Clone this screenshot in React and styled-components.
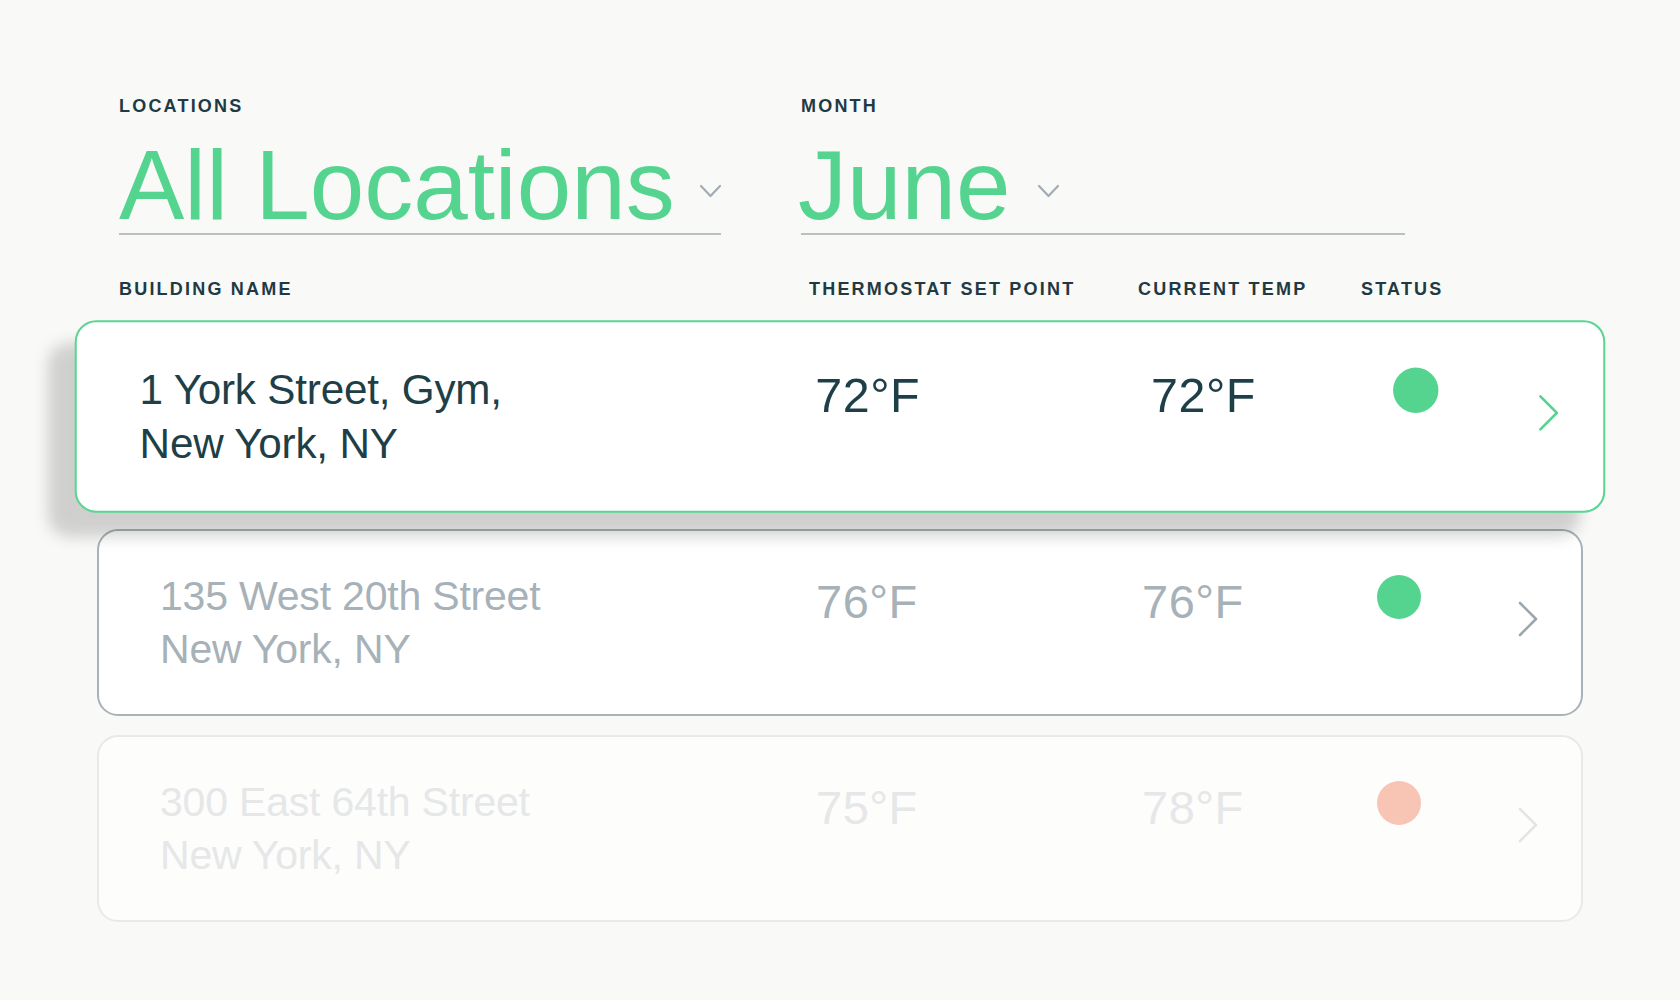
import React from "react";
import styled, { createGlobalStyle } from "styled-components";

const GlobalStyle = createGlobalStyle`
  html, body {
    margin: 0;
    padding: 0;
    background: #f9f9f7;
  }
  body {
    font-family: "Liberation Sans", Arial, sans-serif;
  }
`;

const rows = [
  { name: ["1 York Street, Gym,", "New York, NY"], set: "72°F", current: "72°F", ok: true, tone: "active" },
  { name: ["135 West 20th Street", "New York, NY"], set: "76°F", current: "76°F", ok: true, tone: "muted" },
  { name: ["300 East 64th Street", "New York, NY"], set: "75°F", current: "78°F", ok: false, tone: "faded" },
];

const tones = {
  active: { text: "#1e3f47", border: "#5ad692", chevron: "#55d48f", bg: "#ffffff" },
  muted: { text: "#a7b1b8", border: "#a9b2b9", chevron: "#9ca6ad", bg: "#ffffff" },
  faded: { text: "#e5e7e8", border: "#e8e9e9", chevron: "#e2e4e5", bg: "#fdfdfc" },
};

const Page = styled.div`
  width: 1680px;
  height: 1000px;
  box-sizing: border-box;
  padding: 96px 0 0 97px;
  overflow: hidden;
`;

const Content = styled.div`
  width: 1486px;
  display: flex;
  flex-direction: column;
`;

const Filters = styled.div`
  display: flex;
  gap: 80px;
  padding-left: 22px;
`;

const Filter = styled.div`
  width: ${(p) => p.$w}px;
  display: flex;
  flex-direction: column;
`;

const Label = styled.div`
  font-size: 18px;
  font-weight: 700;
  line-height: 20px;
  letter-spacing: 2.2px;
  color: #1f3a43;
  text-transform: uppercase;
  white-space: nowrap;
`;

const Select = styled.div`
  margin-top: 21px;
  height: 96px;
  display: flex;
  align-items: flex-end;
  border-bottom: 2px solid #b8c0c4;
`;

const SelectValue = styled.span`
  font-size: 98px;
  line-height: 96px;
  color: #55d48f;
  white-space: nowrap;
  margin-left: ${(p) => p.$shift || 0}px;
`;

const Caret = styled.svg`
  width: 23px;
  height: 15px;
  margin-left: ${(p) => p.$gap}px;
  margin-bottom: 34px;
  flex: none;
`;

const HeaderRow = styled.div`
  margin-top: 44px;
  display: grid;
  grid-template-columns: 690px 329px 223px auto;
  padding-left: 22px;
`;

const List = styled.div`
  margin-top: 24px;
  display: flex;
  flex-direction: column;
  gap: 19px;
`;

const Card = styled.div`
  position: relative;
  z-index: ${(p) => (p.$tone === "active" ? 2 : 1)};
  height: 187px;
  box-sizing: border-box;
  border: 2px solid ${(p) => tones[p.$tone].border};
  border-radius: 21px;
  background: ${(p) => tones[p.$tone].bg};
  color: ${(p) => tones[p.$tone].text};
  display: grid;
  grid-template-columns: 656px 326px 235px 1fr auto;
  align-items: center;
  padding: 0 42px 0 61px;
  transform: ${(p) => (p.$tone === "active" ? "scale(1.03)" : "none")};
  box-shadow: ${(p) =>
    p.$tone === "active" ? "-25px 23px 14px rgba(0, 0, 0, 0.17)" : "none"};
`;

const Name = styled.div`
  font-size: 41px;
  line-height: 53px;
  letter-spacing: -0.2px;
  white-space: nowrap;
`;

const Temp = styled.div`
  align-self: start;
  padding-top: 43px;
  font-size: 47px;
  line-height: 56px;
  letter-spacing: 0.5px;
`;

const Dot = styled.div`
  align-self: start;
  margin-top: 44px;
  width: 44px;
  height: 44px;
  border-radius: 50%;
  background: ${(p) => (p.$ok ? "#55d48f" : "#f8c4b3")};
`;

const Chevron = styled.svg`
  justify-self: end;
  width: 22px;
  height: 36px;
  margin-bottom: 8px;
`;

const FilterBar = () => (
  <Filters>
    <Filter $w={602}>
      <Label>Locations</Label>
      <Select>
        <SelectValue>All Locations</SelectValue>
        <Caret $gap={24} viewBox="0 0 23 15">
          <path d="M2 2 L11.5 12 L21 2" fill="none" stroke="#a4abb3" strokeWidth="2.2" strokeLinecap="round" strokeLinejoin="round" />
        </Caret>
      </Select>
    </Filter>
    <Filter $w={604}>
      <Label>Month</Label>
      <Select>
        <SelectValue $shift={-3}>June</SelectValue>
        <Caret $gap={26} viewBox="0 0 23 15">
          <path d="M2 2 L11.5 12 L21 2" fill="none" stroke="#a4abb3" strokeWidth="2.2" strokeLinecap="round" strokeLinejoin="round" />
        </Caret>
      </Select>
    </Filter>
  </Filters>
);

const App = () => {
  return (
    <Page>
      <GlobalStyle />
      <Content>
        <FilterBar />
        <HeaderRow>
          <Label>Building Name</Label>
          <Label>Thermostat Set Point</Label>
          <Label>Current Temp</Label>
          <Label>Status</Label>
        </HeaderRow>
        <List>
          {rows.map((r) => (
            <Card key={r.name[0]} $tone={r.tone}>
              <Name>
                {r.name[0]}
                <br />
                {r.name[1]}
              </Name>
              <Temp>{r.set}</Temp>
              <Temp>{r.current}</Temp>
              <Dot $ok={r.ok} />
              <Chevron viewBox="0 0 22 36">
                <path d="M3 2 L19 18 L3 34" fill="none" stroke={tones[r.tone].chevron} strokeWidth="2.6" strokeLinecap="round" strokeLinejoin="round" />
              </Chevron>
            </Card>
          ))}
        </List>
      </Content>
    </Page>
  );
};

export default App;
